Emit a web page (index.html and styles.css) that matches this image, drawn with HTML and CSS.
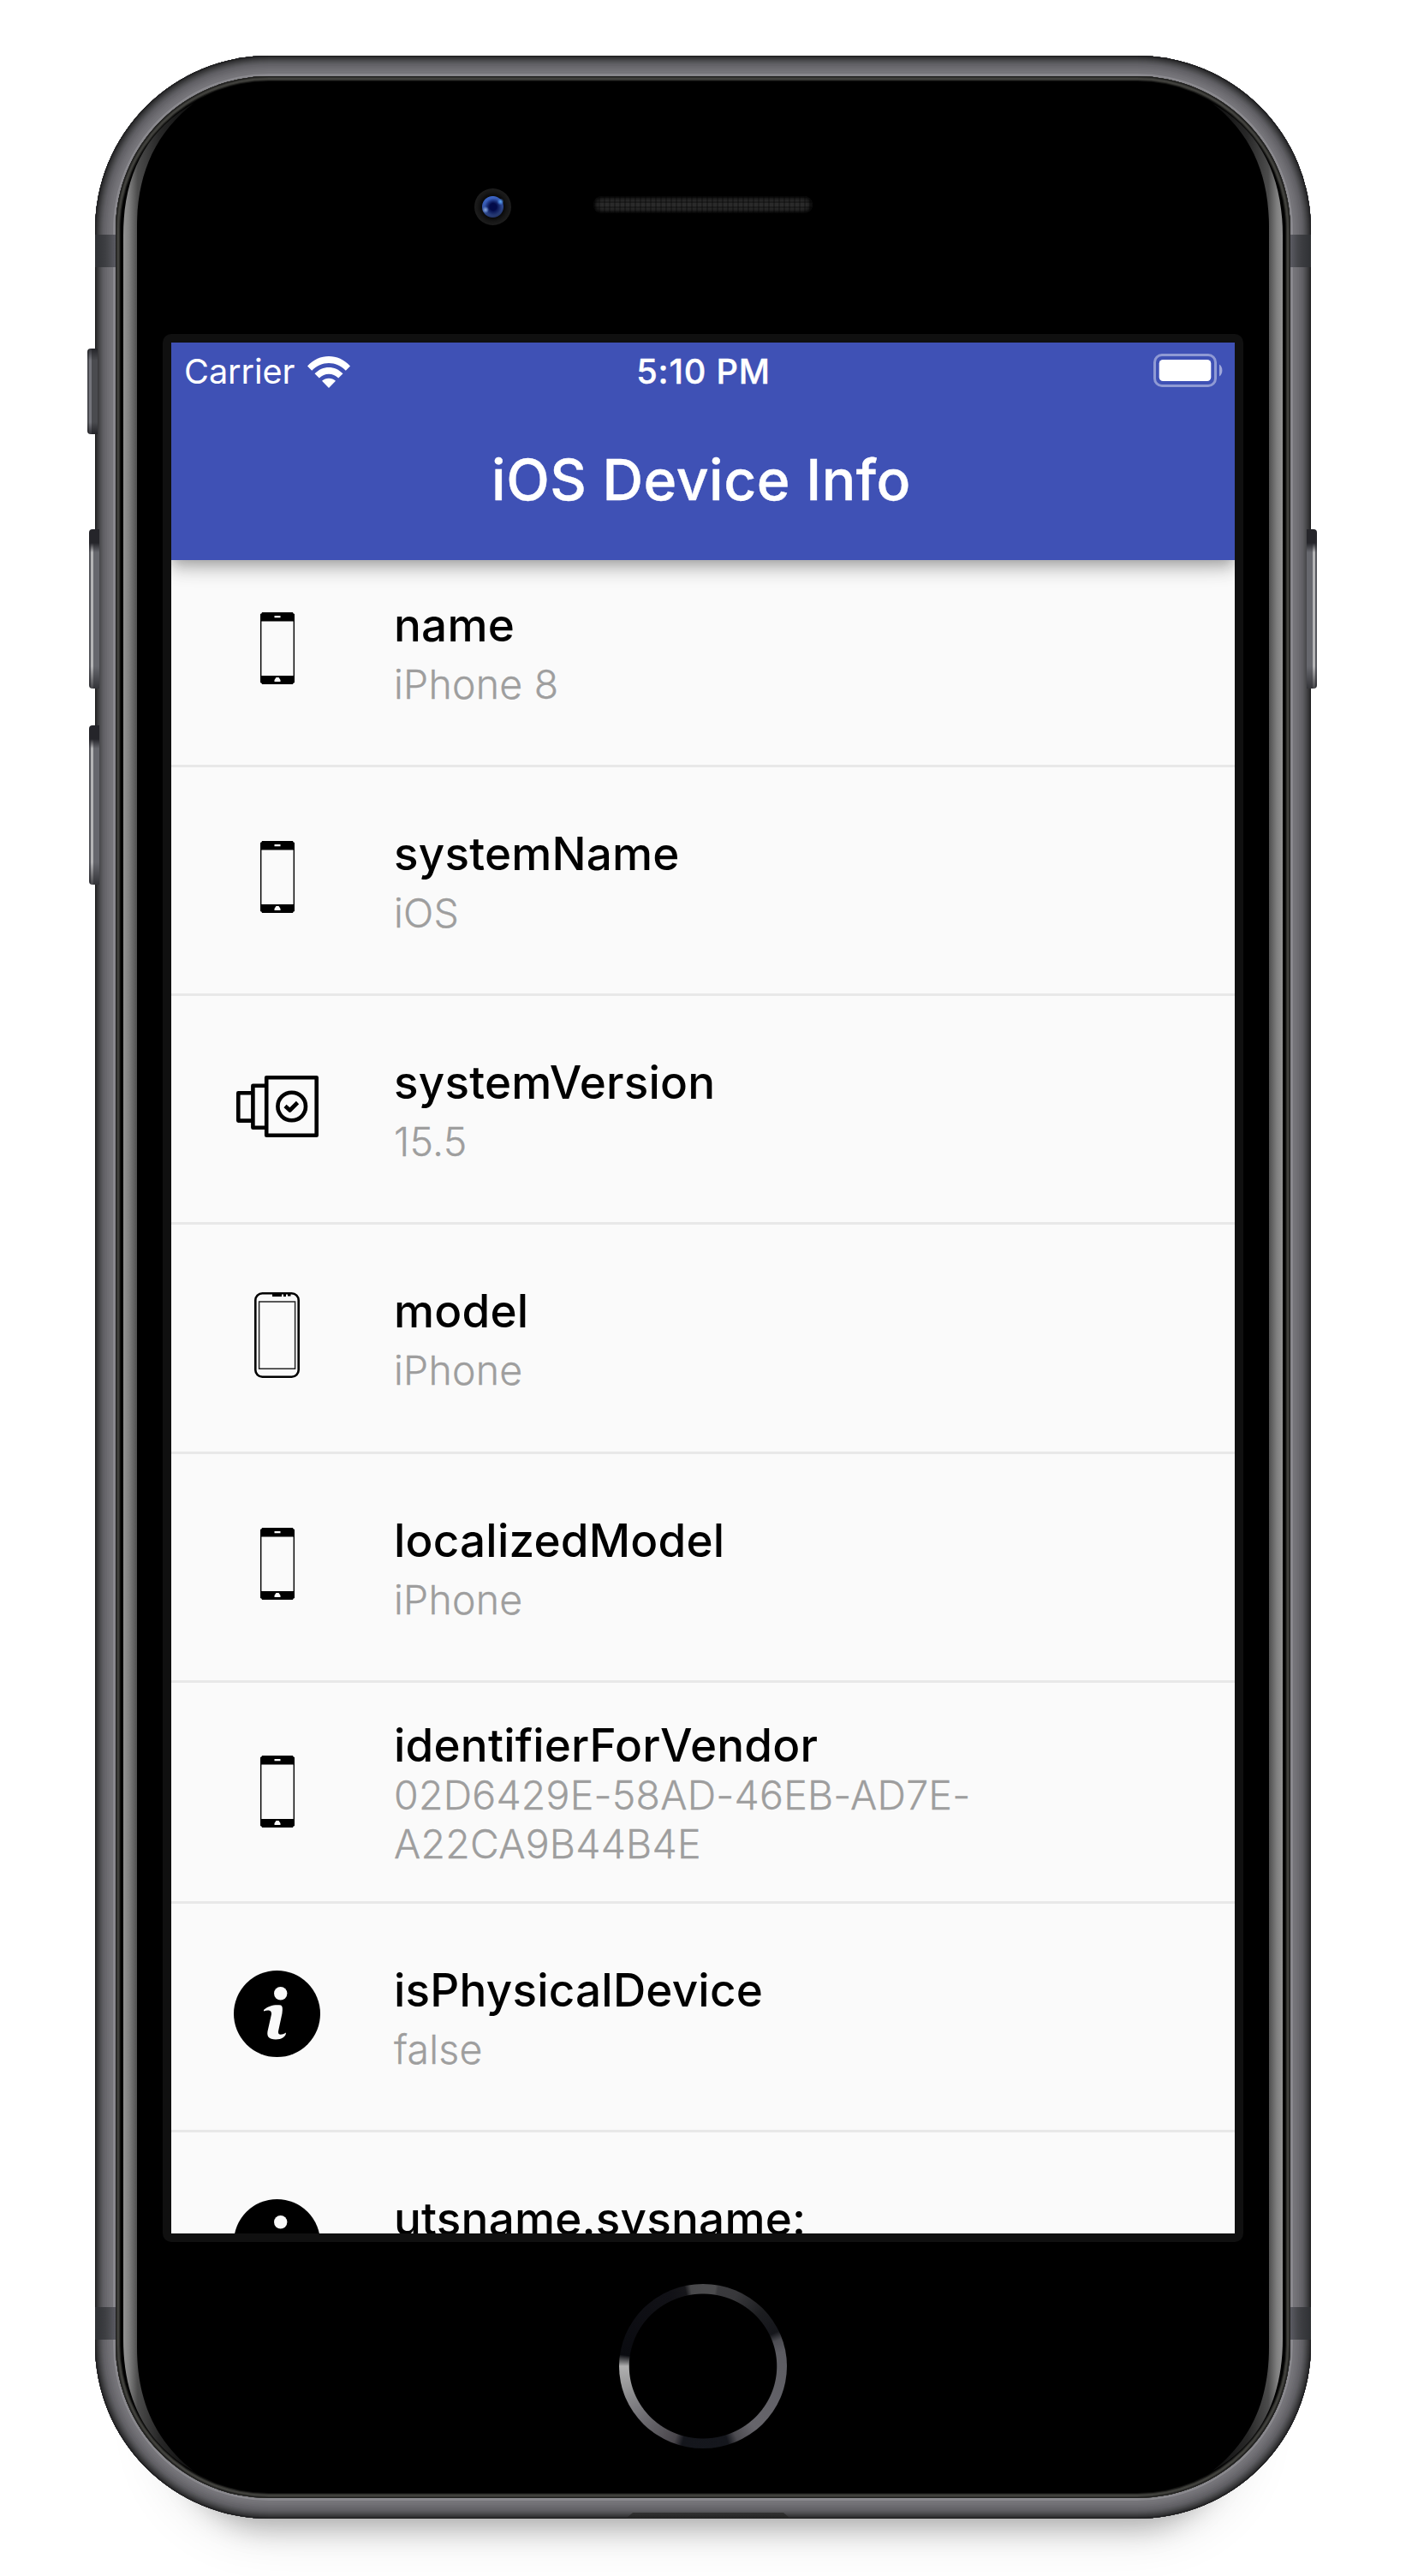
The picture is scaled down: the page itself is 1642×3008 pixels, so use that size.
FILE: index.html
```html
<!DOCTYPE html>
<html lang="en">
<head>
<meta charset="utf-8">
<title>iOS Device Info</title>
<link rel="stylesheet" href="styles.css">
</head>
<body>
<svg width="0" height="0" class="defs">
  <symbol id="phone" viewBox="0 0 40 84">
    <path fill-rule="evenodd" d="M2 0H38Q38 1.5 40 2V82Q38 82.500 38 84H2Q2 82.500 0 82V2Q2 1.500 2 0ZM1.400 10.500V74H38.600V10.500ZM16.500 4V6.200H23.500V4ZM18.500 76H21.500L23.500 79V81H16.500V79Z"/>
  </symbol>
  <symbol id="version" viewBox="0 0 96 72">
    <g fill="none" stroke="#000" stroke-width="4.600" stroke-linejoin="round">
      <path d="M35.200 2.300H93.700V69.700H35.200ZM35.200 11.800H19.400V60.800H35.200M19.400 20.200H2.300V52.600H19.400"/>
      <circle cx="64.700" cy="36" r="16.300"/>
      <path d="M57 35.500L62.500 40.500L71.500 31.500"/>
    </g>
  </symbol>
  <symbol id="model" viewBox="0 0 53 100">
    <rect x="1.300" y="1.300" width="50.400" height="97.400" rx="8" fill="none" stroke="#000" stroke-width="2.600"/>
    <rect x="5.600" y="11" width="42" height="78.300" fill="none" stroke="#222" stroke-width="1.500"/>
    <path d="M21 2H32V5H21ZM34 2H37V5H34ZM39 2H42.500V4.500H39Z"/>
  </symbol>
  <symbol id="info" viewBox="0 0 101 101">
    <circle cx="50.500" cy="50.500" r="50.500"/>
    <circle cx="54.700" cy="26.700" r="7.700" fill="#fafafa"/>
    <path fill="#fafafa" d="M35 46C40 41 48 39.500 55 40.500C57.500 42 57 46 56.500 50L52 71C51.500 76 56 75.500 61 72.500C61 77 56 80.500 49 80.500C41 80.500 38.500 77 39.500 71L44 51C44.500 46 40 45.500 35 47.500Z"/>
  </symbol>
</svg>

<div class="device">
  <i class="key mute"></i><i class="key vol-up"></i><i class="key vol-down"></i><i class="key power"></i>
  <div class="frame">
    <i class="band band-top"></i><i class="band band-bottom"></i><i class="notch"></i>
    <div class="glass">
      <svg class="shine" viewBox="135 89 1372 2828">
        <defs>
          <linearGradient id="sg" gradientUnits="userSpaceOnUse" x1="144" y1="0" x2="227" y2="0">
            <stop offset="0" stop-color="#929292"/><stop offset=".08" stop-color="#808080"/>
            <stop offset=".2" stop-color="#4c4c4c"/><stop offset=".5" stop-color="#282828"/><stop offset="1" stop-color="#0c0c0c"/>
          </linearGradient>
          <path id="edge" fill="url(#sg)" d="M144 275C144 205 170 152 227 120C180 156 160 205 160 265V2741C160 2801 180 2850 227 2886C170 2854 144 2801 144 2731Z"/>
        </defs>
        <use href="#edge"/>
        <use href="#edge" transform="translate(1642 0) scale(-1 1)"/>
      </svg>
      <div class="sensors"><i class="camera"></i><i class="speaker"></i></div>
      <div class="screen">
        <header class="header">
          <div class="status">
            <div class="carrier">Carrier
              <svg width="50" height="37" viewBox="0 0 50 37" fill="#fff">
                <path d="M0 11.500C14 -3.800 36 -3.800 50 11.500L44.800 16.800C34 5 16 5 5.200 16.800Z"/>
                <path d="M8.500 20.300C18 10.500 32 10.500 41.500 20.300L36.200 25.600C30 19 20 19 13.800 25.600Z"/>
                <path d="M17 28.800C21.500 24.600 28.500 24.600 33 28.800L25 37Z"/>
              </svg>
            </div>
            <div class="time">5:10 PM</div>
            <svg class="battery" width="81" height="39" viewBox="0 0 81 39">
              <rect x="1.500" y="1.500" width="71" height="36" rx="8.500" fill="none" stroke="#fff" stroke-opacity=".42" stroke-width="3"/>
              <rect x="6.700" y="7" width="60.600" height="25" rx="4.500" fill="#fff"/>
              <path d="M77 12.500C81.500 15 81.500 24 77 26.500Z" fill="#fff" fill-opacity=".5"/>
            </svg>
          </div>
          <h1 class="title">iOS Device Info</h1>
        </header>
        <ul class="list">
          <li class="row"><span class="icon"><svg width="40" height="84"><use href="#phone"/></svg></span><div class="text"><b>name</b><span>iPhone 8</span></div></li>
          <li class="row"><span class="icon"><svg width="40" height="84"><use href="#phone"/></svg></span><div class="text"><b>systemName</b><span>iOS</span></div></li>
          <li class="row"><span class="icon"><svg width="96" height="72"><use href="#version"/></svg></span><div class="text"><b>systemVersion</b><span>15.5</span></div></li>
          <li class="row"><span class="icon"><svg width="53" height="100"><use href="#model"/></svg></span><div class="text"><b>model</b><span>iPhone</span></div></li>
          <li class="row"><span class="icon"><svg width="40" height="84"><use href="#phone"/></svg></span><div class="text"><b>localizedModel</b><span>iPhone</span></div></li>
          <li class="row tall"><span class="icon"><svg width="40" height="84"><use href="#phone"/></svg></span><div class="text"><b>identifierForVendor</b><span>02D6429E-58AD-46EB-AD7E-<br>A22CA9B44B4E</span></div></li>
          <li class="row"><span class="icon"><svg width="101" height="101"><use href="#info"/></svg></span><div class="text"><b>isPhysicalDevice</b><span>false</span></div></li>
          <li class="row"><span class="icon"><svg width="101" height="101"><use href="#info"/></svg></span><div class="text"><b>utsname.sysname:</b></div></li>
        </ul>
      </div>
      <i class="home"></i>
    </div>
  </div>
</div>
</body>
</html>
```
FILE: styles.css
```css
* { box-sizing: border-box; }
body {
  margin: 0;
  width: 1642px;
  height: 3008px;
  padding: 65px 111px 0;
  overflow: hidden;
  background: #fff;
  font-family: Inter, "Liberation Sans", sans-serif;
}
i { display: block; }
.defs { position: absolute; }
.device { position: relative; width: 1420px; height: 2876px; }

/* Metal frame: one-pixel rings shade the rounded edge */
.frame {
  position: relative;
  height: 2876px;
  padding: 24px;
  border-radius: 203px;
  background: #89888d;
  box-shadow:
    inset 0 0 0 1px #1f1f20, inset 0 0 0 2px #2b2b2d, inset 0 0 0 3px #333335,
    inset 0 0 0 4px #3a3a3c, inset 0 0 0 5px #414143, inset 0 0 0 6px #48484b,
    inset 0 0 0 7px #4e4e51, inset 0 0 0 8px #545457, inset 0 0 0 9px #59595d,
    inset 0 0 0 10px #5e5d62, inset 0 0 0 12px #636267, inset 0 0 0 14px #68676c,
    inset 0 0 0 16px #6d6c71, inset 0 0 0 18px #717075, inset 0 0 0 21px #757479,
    0 114px 32px -104px rgba(0, 0, 0, .28),
    0 94px 60px -74px rgba(0, 0, 0, .1);
}
.band {
  position: absolute;
  left: 0;
  right: 0;
  height: 38px;
  background: linear-gradient(90deg, #2e3033, #3e3f43 12px, #46474b 16px, #5b5b63 24px, #5b5b63 calc(100% - 24px), #46474b calc(100% - 16px), #3e3f43 calc(100% - 12px), #2e3033);
}
.band-top { top: 209px; }
.band-bottom { bottom: 209px; }
.notch {
  position: absolute;
  left: 620px;
  bottom: 0;
  width: 192px;
  height: 7px;
  background: linear-gradient(#333, #222);
  clip-path: polygon(8px 0, 184px 0, 100% 100%, 0 100%);
}
/* Side keys overlap the edge of the frame by a few pixels */
.key { position: absolute; z-index: 1; width: 12px; border-radius: 4px 0 0 4px; }
.mute {
  left: -9px; top: 342px; height: 100px;
  background: linear-gradient(rgba(20,20,24,.7), transparent 14px, transparent 86px, rgba(20,20,24,.7)),
    linear-gradient(90deg, #4a4b50 2px, #74757c 2px 5px, #4a4b4f 5px);
}
.vol-up, .vol-down, .power {
  height: 186px;
  background: linear-gradient(#25252a 16px, transparent 27px, transparent 160px, rgba(40,40,44,.8)),
    linear-gradient(90deg, #55565c 2px, #b4b4b6 2px 5px, #66676d 5px);
}
.vol-up { left: -7px; top: 553px; }
.vol-down { left: -7px; top: 782px; }
.power { right: -7px; top: 553px; transform: scaleX(-1); }

.glass {
  position: relative;
  height: 2828px;
  border-radius: 179px;
  background: #000;
  display: flex;
  flex-direction: column;
  align-items: center;
  box-shadow: inset 0 0 0 1px #1f1f1e, inset 0 0 0 2px #32322f, inset 0 0 0 4px #41413d, inset 0 0 0 5px #2e2e2b, inset 0 0 0 6px #121211;
}
.shine { position: absolute; left: 0; top: 0; width: 1372px; height: 2828px; }
.sensors {
  align-self: stretch;
  flex: none;
  height: 301px;
  padding: 131px 0 0 419px;
  display: flex;
  gap: 96px;
}
.camera {
  width: 43px;
  height: 43px;
  border-radius: 50%;
  background:
    radial-gradient(circle at 13px 25px, #8fa8d8 0, rgba(110,145,210,.7) 2px, transparent 4px),
    radial-gradient(circle at 30.500px 15.500px, #5fa4e6 0, rgba(70,130,220,.7) 2px, transparent 4px),
    radial-gradient(circle at 21.500px 21.500px, transparent 12px, #0a0a0a 13px, #161616 17px, #1d1d1d 21px),
    radial-gradient(circle at 22px 21.500px, #020a48 4px, transparent 10px),
    linear-gradient(160deg, #3b63c4 30%, #24366c 70%);
}
.speaker {
  width: 256px;
  height: 20px;
  margin-top: 9px;
  border-radius: 10px;
  background:
    repeating-linear-gradient(90deg, rgba(0,0,0,.28) 0 2px, transparent 2px 6px),
    repeating-linear-gradient(rgba(0,0,0,.28) 0 2px, transparent 2px 6px),
    #2a2a2a;
  box-shadow: inset 0 0 5px 2px #000;
}
.home {
  width: 196px;
  height: 192px;
  margin-top: 49px;
  border-radius: 50%;
  background:
    radial-gradient(closest-side, #000 87.500%, transparent 88.500%),
    conic-gradient(#4b4b4d 9deg, #3a3a3d 11deg, #38383b 25deg, #1c1d20 48deg, #15161b 65deg, #4c4c52 71deg, #5c5c62 80deg, #66656b 140deg, #4c4b50 155deg, #15171d 162deg, #14161c 195deg, #49464b 201deg, #6c6b70 228deg, #8e8e90 250deg, #b0b0b0 270deg, #0a0b10 278deg, #111116 335deg, #16161a 347deg, #48484a 351deg, #4b4b4d);
}

.screen {
  flex: none;
  width: 1262px;
  height: 2228px;
  border: 10px solid #101010;
  border-radius: 10px;
  background: #fafafa;
  overflow: hidden;
  position: relative;
}
.header {
  position: relative;
  z-index: 1;
  height: 253.600px;
  background: #3f51b5;
  color: #fff;
  box-shadow: 0 6.600px 13px -3.300px rgba(0,0,0,.2), 0 13px 16.500px rgba(0,0,0,.14), 0 3.300px 33px rgba(0,0,0,.12);
}
.status {
  height: 68px;
  padding: 0 14px 0 15px;
  display: grid;
  grid-template-columns: 1fr auto 1fr;
  align-items: center;
  font-size: 39.700px;
}
.carrier { display: flex; align-items: center; gap: 15px; letter-spacing: -.1px; }
.time { font-weight: 500; letter-spacing: .8px; -webkit-text-stroke: .4px #fff; }
.battery { justify-self: end; margin-top: -3px; }
.title {
  margin: 0;
  height: 185px;
  padding-right: 4px;
  line-height: 185px;
  text-align: center;
  font-size: 66px;
  font-weight: 500;
  letter-spacing: .5px;
  -webkit-text-stroke: .4px #fff;
}
.list { margin: -24.800px 0 0; padding: 0; list-style: none; }
.row {
  height: 267.200px;
  border-bottom: 3px solid #e8e8e8;
  display: flex;
}
.icon {
  width: 247px;
  height: 257px;
  display: flex;
  align-items: center;
  justify-content: center;
}
.text { padding: 69px 0 0 13px; display: flex; flex-direction: column; gap: 9px; }
.text b { font-size: 53px; line-height: 64px; font-weight: 500; letter-spacing: .2px; color: #000; }
.text span { font-size: 46.400px; line-height: 57px; font-weight: 300; letter-spacing: .25px; color: #9e9e9e; -webkit-text-stroke: .3px #9e9e9e; }
.tall { height: 257.800px; }
.tall .text { padding-top: 41px; gap: 0; }
.tall .text span { margin-top: -1.500px; }
.tall .icon { height: 254px; }
```
